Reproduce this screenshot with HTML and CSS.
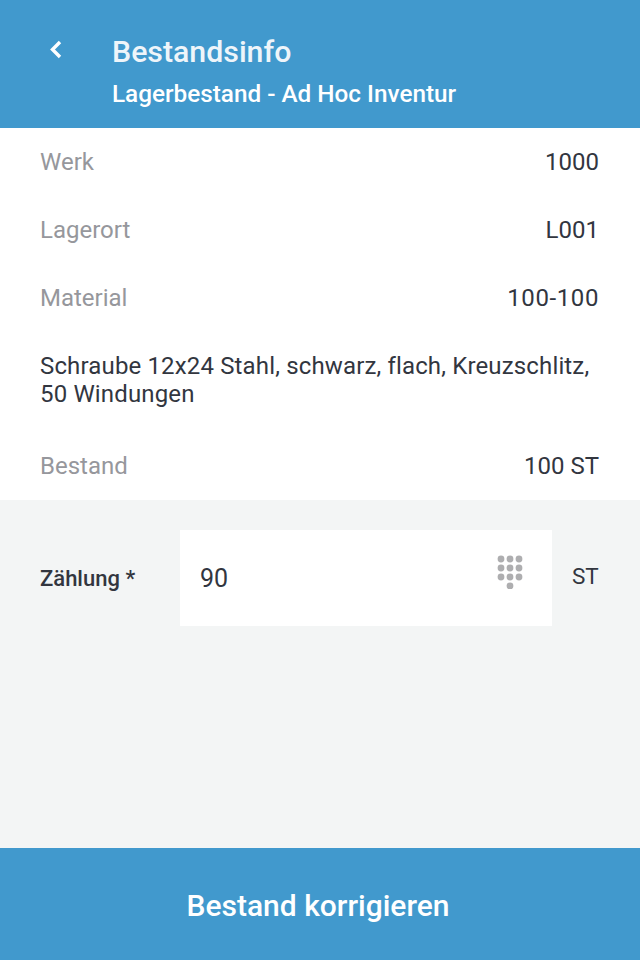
FILE: index.html
```html
<!DOCTYPE html>
<html lang="de">
<head>
    <meta charset="UTF-8">
    <meta name="viewport" content="width=device-width, initial-scale=1.0">
    <title>Bestandsinfo</title>
    <link rel="stylesheet" href="styles.css">
</head>
<body>
    <div class="app">
        <header class="header">
            <div class="back">
                <svg width="14" height="20" viewBox="0 0 14 20"><path d="M11 2 L3.5 9.5 L11 17" fill="none" stroke="#fff" stroke-width="3.4"/></svg>
            </div>
            <div class="titles">
                <h1>Bestandsinfo</h1>
                <h2>Lagerbestand - Ad Hoc Inventur</h2>
            </div>
        </header>
        <section class="info">
            <div class="row"><span class="label">Werk</span><span>1000</span></div>
            <div class="row"><span class="label">Lagerort</span><span>L001</span></div>
            <div class="row"><span class="label">Material</span><span class="value-wide">100-100</span></div>
            <p class="desc">Schraube 12x24 Stahl, schwarz, flach, Kreuzschlitz, 50 Windungen</p>
            <div class="row"><span class="label">Bestand</span><span>100 ST</span></div>
        </section>
        <section class="count">
            <label class="count-label" for="zaehlung">Zählung *</label>
            <div class="field">
                <input id="zaehlung" class="field-input" type="text" value="90">
                <svg class="keypad" width="26" height="34" viewBox="0 0 26 34">
                    <g fill="#aeaeb0">
                        <circle cx="4" cy="4" r="3.4"/><circle cx="13" cy="4" r="3.4"/><circle cx="22" cy="4" r="3.4"/>
                        <circle cx="4" cy="13" r="3.4"/><circle cx="13" cy="13" r="3.4"/><circle cx="22" cy="13" r="3.4"/>
                        <circle cx="4" cy="22" r="3.4"/><circle cx="13" cy="22" r="3.4"/><circle cx="22" cy="22" r="3.4"/>
                        <circle cx="13" cy="31" r="3.4"/>
                    </g>
                </svg>
            </div>
            <span class="unit">ST</span>
        </section>
        <button class="submit">Bestand korrigieren</button>
    </div>
</body>
</html>
```

FILE: styles.css
```css
* {
    box-sizing: border-box;
}
body {
    margin: 0;
    font-family: Roboto, sans-serif;
    color: #32363f;
    background-color: #f3f5f5;
}
.app {
    height: 960px;
    display: flex;
    flex-direction: column;
}
.header {
    height: 128px;
    background-color: #4199cd;
    color: #fff;
    display: flex;
}
.back {
    width: 112px;
    padding: 40px 0 0 49px;
}
.back svg {
    display: block;
}
.titles {
    padding-top: 34px;
}
h1 {
    margin: 0;
    font-size: 30.3px;
    font-weight: 500;
    line-height: 36px;
    color: #eef5fa;
}
h2 {
    margin: 8px 0 0;
    font-size: 24.3px;
    font-weight: 500;
    line-height: 32px;
}
.info {
    background: #fff;
    padding: 0 41px 0 40px;
    height: 372px;
    font-size: 24px;
}
.row {
    height: 68px;
    display: flex;
    justify-content: space-between;
    align-items: center;
}
.label {
    color: #96979c;
}
.value-wide {
    letter-spacing: .6px;
}
.desc {
    margin: 0 -10px 0 0;
    padding: 20px 0 0;
    height: 100px;
    line-height: 28px;
    letter-spacing: .15px;
}
.count {
    height: 348px;
    padding: 30px 0 0 40px;
    display: flex;
    align-items: flex-start;
    font-size: 24px;
}
.count-label {
    width: 140px;
    line-height: 98px;
    font-size: 22px;
    font-weight: 500;
}
.field {
    width: 372px;
    height: 96px;
    background: #fff;
    display: flex;
    align-items: center;
    padding: 0 29px 0 20px;
}
.field-input {
    flex: 1;
    min-width: 0;
    border: 0;
    padding: 0;
    outline: 0;
    background: transparent;
    font: inherit;
    color: inherit;
    font-size: 25px;
}
.keypad {
    margin-bottom: 12px;
}
.unit {
    margin-left: 20px;
    line-height: 93px;
    font-size: 22.5px;
}
.submit {
    height: 112px;
    padding: 2px 4px 0 0;
    border: 0;
    background-color: #4199cd;
    color: #fff;
    font-family: inherit;
    font-size: 30px;
    font-weight: 500;
}
```
